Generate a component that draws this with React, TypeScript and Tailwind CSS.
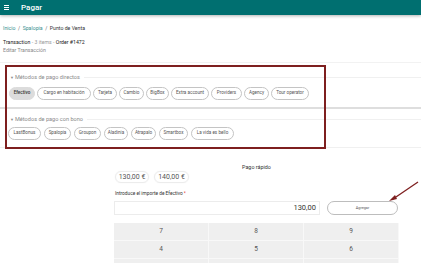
import React from 'react';

const directos = [
  { label: 'Efectivo', w: 'w-[26px]', active: true },
  { label: 'Cargo en habitación', w: 'w-[54px]' },
  { label: 'Tarjeta', w: 'w-[24px]' },
  { label: 'Cambio', w: 'w-[25px]' },
  { label: 'BigBox', w: 'w-[23px]' },
  { label: 'Extra account', w: 'w-[38px]' },
  { label: 'Providers', w: 'w-[31px]' },
  { label: 'Agency', w: 'w-[25px]' },
  { label: 'Tour operator', w: 'w-[38px]' },
];

const bonos = [
  { label: 'LastBonus', w: 'w-[33px]' },
  { label: 'Spalopia', w: 'w-[27px]' },
  { label: 'Groupon', w: 'w-[27px]' },
  { label: 'Aladinia', w: 'w-[24px]' },
  { label: 'Atrapalo', w: 'w-[25px]' },
  { label: 'Smartbox', w: 'w-[29px]' },
  { label: 'La vida es bello', w: 'w-[43px]' },
];

function Chip({ label, w, active }: { label: string; w: string; active?: boolean }) {
  return (
    <div
      className={`${w} h-[13px] shrink-0 rounded-full flex items-center justify-center text-[4.6px] whitespace-nowrap ${
        active ? 'bg-[#dcdcdc] text-[#333] font-medium border border-[#dcdcdc]' : 'border border-[#c4c4c4] text-[#555]'
      }`}
    >
      {label}
    </div>
  );
}

function Legend({ text }: { text: string }) {
  return (
    <div className="flex items-center h-[8px] pl-[10px]">
      <span className="text-[5.6px] text-[#8a8a8a] whitespace-nowrap">
        <span className="text-[4px] mr-[1px]">▼</span>
        {text}
      </span>
      <div className="flex-1 ml-[4px] h-px bg-[#f0f0f0]" />
    </div>
  );
}

export default function App() {
  // only the rows that fit in the view
  const keys = ['7', '8', '9', '4', '5', '6'];
  return (
    <div className="relative w-[421px] h-[263px] overflow-hidden bg-white font-['Roboto',sans-serif]">
      {/* Header */}
      <div className="h-[15px] bg-[#006f70] flex items-center pl-[4px] shadow-[0_1px_3px_rgba(0,0,0,0.3)]">
        <div className="flex flex-col gap-[1px] w-[5px]">
          <div className="h-px bg-white" />
          <div className="h-px bg-white" />
          <div className="h-px bg-white" />
        </div>
        <span className="ml-[12px] text-white text-[8px] font-medium">Pagar</span>
      </div>

      {/* Breadcrumb */}
      <div className="mt-[10px] pl-[3px] h-[8px] flex items-center text-[5.2px] text-[#333] whitespace-nowrap">
        <span className="text-[#3a8f8f]">Inicio</span>
        <span className="mx-[2.5px] text-[#666]">/</span>
        <span className="text-[#3a8f8f]">Spalopia</span>
        <span className="mx-[2.5px] text-[#666]">/</span>
        <span>Punto de Venta</span>
      </div>

      {/* Transaction */}
      <div className="mt-[6px] pl-[3px] h-[8px] flex items-center text-[5.2px] text-[#222] whitespace-nowrap">
        Transaction<span className="text-[#999] mx-[1.5px]">- 3 items -</span>Order #1472
      </div>
      <div className="pl-[3px] h-[8px] flex items-center text-[5.2px] text-[#888] whitespace-nowrap">Editar Transacción</div>

      {/* Payment methods */}
      <div className="mt-[7px] border-t border-[#f2f2f2]">
        <div className="pt-[10px]">
          <Legend text="Métodos de pago directos" />
          <div className="flex gap-[2px] pl-[9px] mt-[6px]">
            {directos.map((c) => (
              <Chip key={c.label} {...c} />
            ))}
          </div>
          <div className="mt-[7px] h-[2px] bg-[#dedede]" />
        </div>
        <div className="pt-[6px]">
          <Legend text="Métodos de pago con bono" />
          <div className="flex gap-[3px] pl-[8px] mt-[4px]">
            {bonos.map((c) => (
              <Chip key={c.label} {...c} />
            ))}
          </div>
          <div className="mt-[7px] h-px bg-[#f0f0f0]" />
        </div>
      </div>

      {/* Quick pay */}
      <div className="ml-[114px] w-[285px] mt-[16px]">
        <div className="text-center text-[5.4px] text-[#333] h-[6px] leading-[6px]">Pago rápido</div>
        <div className="flex gap-[5px] mt-[1px] pl-[1px]">
          <div className="w-[34px] h-[12px] rounded-full border border-[#ececec] shadow-[0_0_1px_rgba(0,0,0,0.1)] flex items-center justify-center text-[7px] text-[#555]">130,00 €</div>
          <div className="w-[35px] h-[12px] rounded-full border border-[#ececec] shadow-[0_0_1px_rgba(0,0,0,0.1)] flex items-center justify-center text-[7px] text-[#555]">140,00 €</div>
        </div>
        <div className="mt-[8px] pl-[1px] h-[6px] flex items-center text-[4.8px] text-[#333] whitespace-nowrap">
          Introduce el importe de Efectivo <span className="text-[#e53935] ml-[1px]">*</span>
        </div>
        <div className="flex items-center mt-[4px]">
          <div className="w-[206px] h-[14px] border border-[#ececec] flex items-center justify-end pr-[3px] text-[7.5px] text-[#333]">130,00</div>
          <div className="ml-[7px] w-[71px] h-[14px] rounded-full border border-[#bdbdbd] flex items-center justify-center text-[3.8px] text-[#555]">Agregar</div>
        </div>

        {/* Keypad */}
        <div className="mt-[8px] grid grid-cols-3 bg-[#efefef]">
          {keys.map((k) => (
            <div key={k} className="h-[18px] flex items-center justify-center text-[6.5px] text-[#555] border-r border-b border-[#f8f8f8]">
              {k}
            </div>
          ))}
          <div className="h-[10px] border-r border-[#f8f8f8]" />
          <div className="h-[10px] border-r border-[#f8f8f8]" />
          <div className="h-[10px] border-r border-[#f8f8f8]" />
        </div>
      </div>

      {/* Annotation overlay */}
      <div className="absolute left-[5px] top-[65px] w-[321px] h-[84px] border-2 border-[#7e1f1f] pointer-events-none" />
      <svg className="absolute left-[385px] top-[180px]" width="36" height="24" viewBox="0 0 36 24">
        <line x1="33" y1="2" x2="8" y2="19" stroke="#7e1f1f" strokeWidth="1.3" />
        <polygon points="4,21 10,15 12,19" fill="#7e1f1f" />
      </svg>
    </div>
  );
}
